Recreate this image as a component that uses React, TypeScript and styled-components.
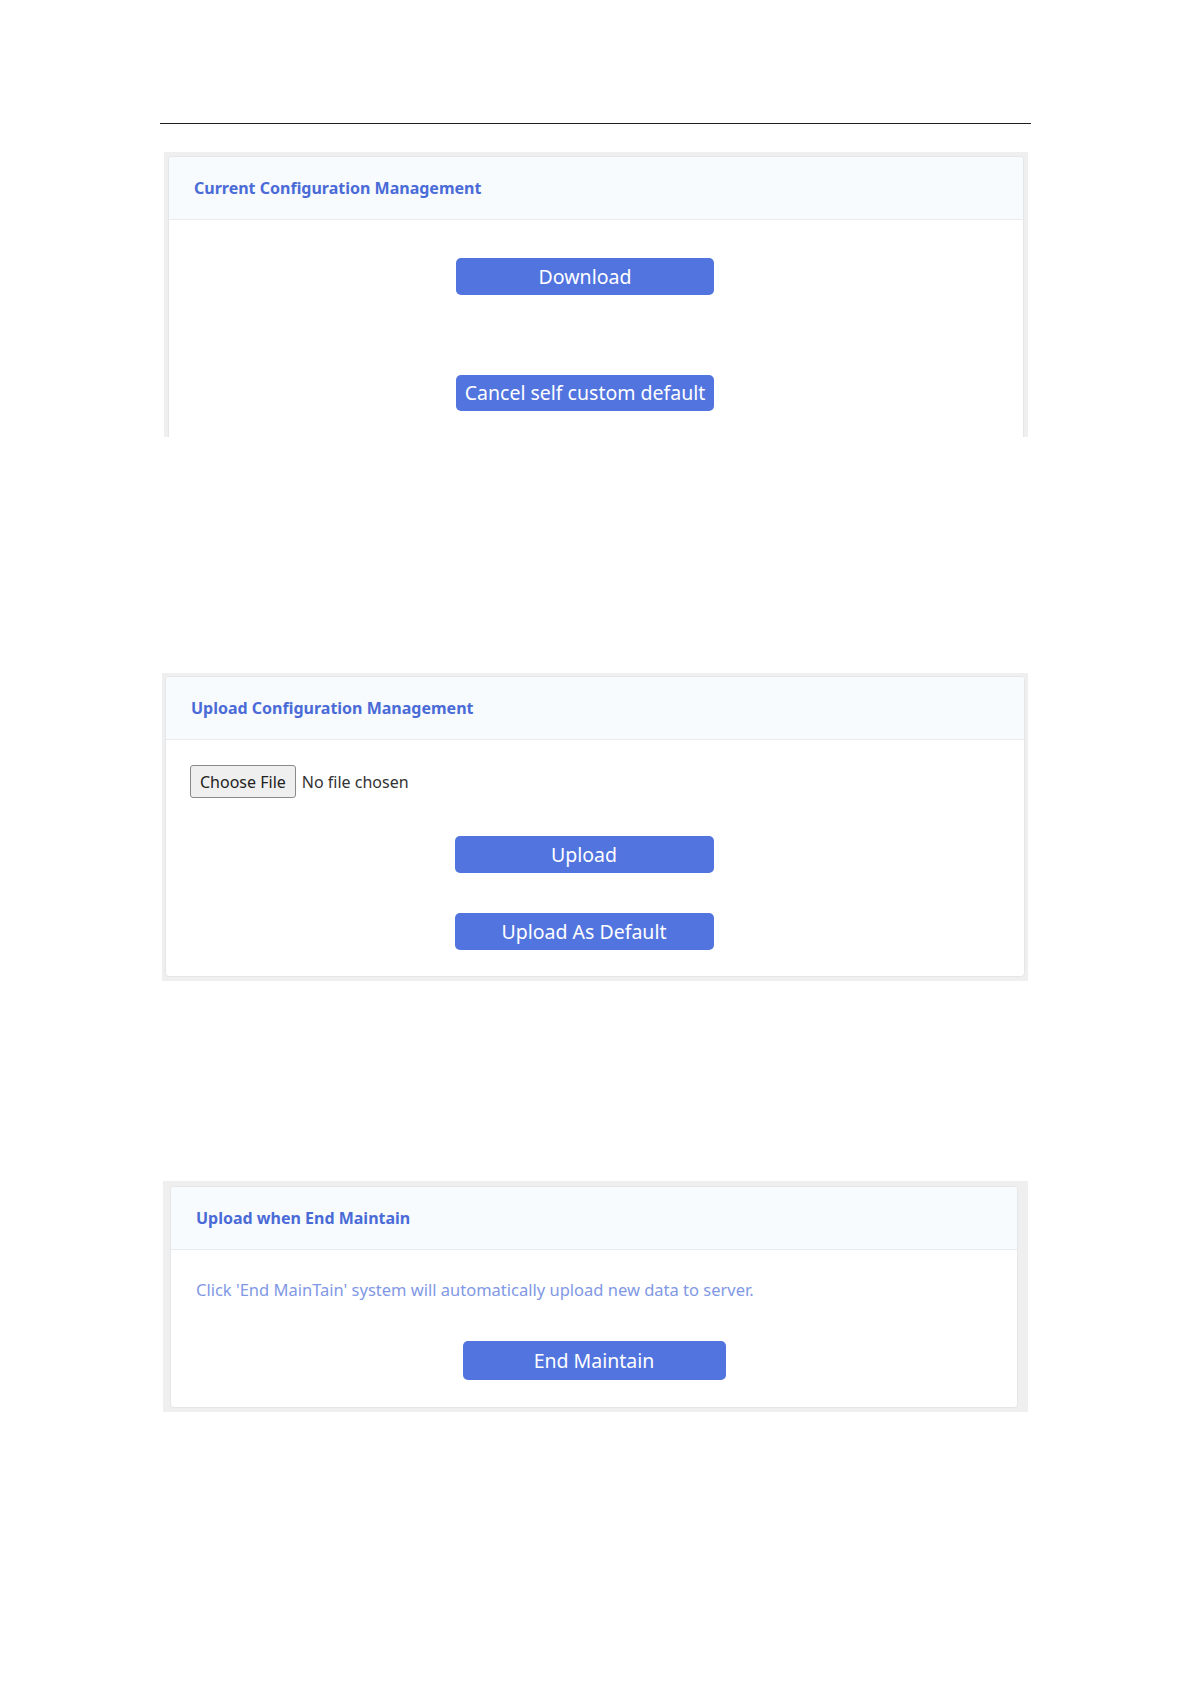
import React from 'react';
import styled, { createGlobalStyle } from 'styled-components';

const GlobalStyle = createGlobalStyle`
  body {
    margin: 0;
    background: #ffffff;
    font-family: 'Noto Sans', 'Open Sans', sans-serif;
  }
`;

const Page = styled.main`
  width: 871px;
  padding: 123px 0 200px 160px;
`;

const Rule = styled.hr`
  margin: 0;
  border: 0;
  border-top: 1px solid #1e1e1e;
`;

const Frame = styled.section<{ $top: number; $left: number; $width: number; $pad: string }>`
  margin-top: ${(p) => p.$top}px;
  margin-left: ${(p) => p.$left}px;
  width: ${(p) => p.$width}px;
  padding: ${(p) => p.$pad};
  box-sizing: border-box;
  background: #efeff0;
`;

const Card = styled.div<{ $clipped?: boolean }>`
  background: #fff;
  border: 1px solid #e4e6e8;
  border-bottom: ${(p) => (p.$clipped ? 'none' : '1px solid #e4e6e8')};
  border-radius: ${(p) => (p.$clipped ? '4px 4px 0 0' : '4px')};
  overflow: hidden;
`;

const CardHeader = styled.header`
  height: 62px;
  display: flex;
  align-items: center;
  padding-left: 25px;
  background: #f7fbfd;
  border-bottom: 1px solid #e8ecef;
`;

const CardTitle = styled.h5`
  margin: 0;
  font-size: 16px;
  font-weight: 700;
  color: #4a6bd7;
`;

const CardBody = styled.div<{ $pt: number; $pb: number; $shift: number }>`
  display: flex;
  flex-direction: column;
  align-items: center;
  padding: ${(p) => p.$pt}px ${(p) => p.$shift}px ${(p) => p.$pb}px 0;
`;

const ActionButton = styled.button<{ $w: number; $h: number; $mt?: number }>`
  width: ${(p) => p.$w}px;
  height: ${(p) => p.$h}px;
  margin-top: ${(p) => p.$mt ?? 0}px;
  padding: 0;
  border: 0;
  border-radius: 5px;
  background: #5174df;
  color: #fff;
  font-family: 'Noto Sans', 'Open Sans', sans-serif;
  font-size: 19.5px;
  line-height: 1;
  white-space: nowrap;
  cursor: pointer;
`;

const FileRow = styled.div`
  align-self: flex-start;
  padding-left: 24px;
`;

const FileInput = styled.input`
  font-family: 'Noto Sans', 'Open Sans', sans-serif;
  font-size: 16px;
  color: #333;

  &::file-selector-button {
    height: 33px;
    margin-right: 6px;
    padding: 0 9px;
    border: 1px solid #8a8a8a;
    border-radius: 3px;
    background: #efefef;
    color: #222;
    font-family: 'Noto Sans', 'Open Sans', sans-serif;
    font-size: 16px;
  }
`;

const Hint = styled.p`
  align-self: flex-start;
  margin: 0 0 0 25px;
  font-size: 16.5px;
  line-height: 22px;
  color: #8198e5;
`;

export default function App() {
  return (
    <>
      <GlobalStyle />
      <Page>
        <Rule />

        <Frame $top={28} $left={4} $width={864} $pad="4px 4px 0 4px">
          <Card $clipped>
            <CardHeader>
              <CardTitle>Current Configuration Management</CardTitle>
            </CardHeader>
            <CardBody $pt={38} $pb={26} $shift={22}>
              <ActionButton $w={258} $h={37}>Download</ActionButton>
              <ActionButton $w={258} $h={36} $mt={80}>
                Cancel self custom default
              </ActionButton>
            </CardBody>
          </Card>
        </Frame>

        <Frame $top={236} $left={2} $width={866} $pad="3px 3px 4px 3px">
          <Card>
            <CardHeader>
              <CardTitle>Upload Configuration Management</CardTitle>
            </CardHeader>
            <CardBody $pt={25} $pb={26} $shift={22}>
              <FileRow>
                <FileInput type="file" />
              </FileRow>
              <ActionButton $w={259} $h={37} $mt={38}>Upload</ActionButton>
              <ActionButton $w={259} $h={37} $mt={40}>Upload As Default</ActionButton>
            </CardBody>
          </Card>
        </Frame>

        <Frame $top={200} $left={3} $width={865} $pad="5px 10px 4px 7px">
          <Card>
            <CardHeader>
              <CardTitle>Upload when End Maintain</CardTitle>
            </CardHeader>
            <CardBody $pt={29} $pb={27} $shift={0}>
              <Hint>Click 'End MainTain' system will automatically upload new data to server.</Hint>
              <ActionButton $w={263} $h={39} $mt={40}>End Maintain</ActionButton>
            </CardBody>
          </Card>
        </Frame>
      </Page>
    </>
  );
}
